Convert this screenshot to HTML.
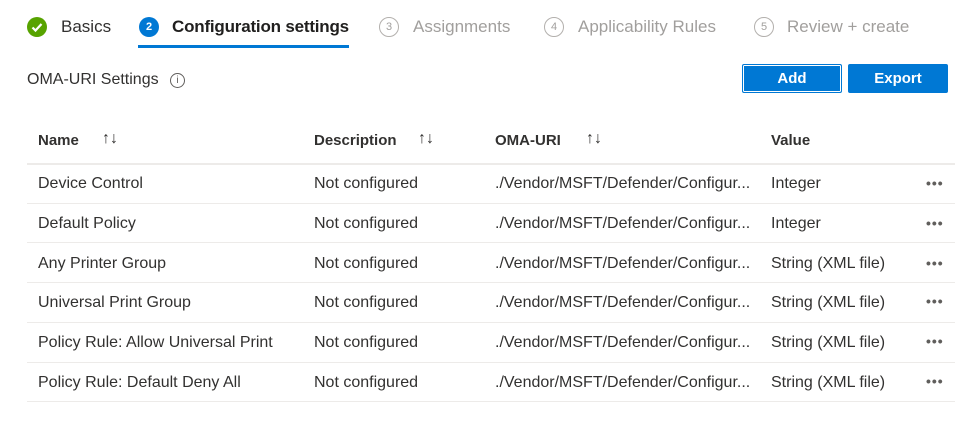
<!DOCTYPE html>
<html><head><meta charset="utf-8"><style>
body{margin:0;width:965px;height:428px;background:#fff;font-family:"Liberation Sans",sans-serif;color:#323130;position:relative;overflow:hidden}
.a{position:absolute;white-space:nowrap}
.step{font-size:17px;top:17px}
.circ{position:absolute;width:20px;height:20px;border-radius:50%;box-sizing:border-box;font-size:11px;text-align:center;line-height:18px;top:17px}
.g{color:#a19f9d}
.h{font-weight:bold;font-size:15px;top:132px}
.c{font-size:16px}
.line{position:absolute;left:27px;width:928px;height:1px;background:#edebe9}
.btn{position:absolute;top:64px;height:29px;width:100px;background:#0078d4;color:#fff;font-weight:bold;font-size:15px;text-align:center;line-height:29px;border-radius:2px;box-sizing:border-box}
.dots{position:absolute;left:926px;font-size:14px;letter-spacing:1px;color:#605e5c;font-weight:bold}
.sort{font-size:16px;color:#323130;top:130px}
</style></head><body>
<div class="circ" style="left:27px;background:#57a300;"><svg width="20" height="20" style="position:absolute;left:0;top:0"><path d="M5.5 10.5l3 3 6-6.5" stroke="#fff" stroke-width="2.2" fill="none"/></svg></div>
<div class="a step" style="left:61px">Basics</div>
<div class="circ" style="left:139px;background:#0078d4;color:#fff;font-weight:bold;line-height:20px">2</div>
<div class="a step" style="left:172px;font-weight:bold;color:#201f1e;letter-spacing:-0.2px">Configuration settings</div>
<div style="position:absolute;left:138px;top:45px;width:211px;height:3px;background:#0078d4"></div>
<div class="circ g" style="left:379px;border:1px solid #b3b0ad">3</div>
<div class="a step g" style="left:413px">Assignments</div>
<div class="circ g" style="left:544px;border:1px solid #b3b0ad">4</div>
<div class="a step g" style="left:578px">Applicability Rules</div>
<div class="circ g" style="left:754px;border:1px solid #b3b0ad">5</div>
<div class="a step g" style="left:787px">Review + create</div>

<div class="a" style="left:27px;top:71px;font-size:16px">OMA-URI Settings</div>
<div class="a" style="left:170px;top:73px;width:13px;height:13px;border:1px solid #605e5c;border-radius:50%;font-size:10px;text-align:center;line-height:13px;color:#605e5c">i</div>

<div class="btn" style="left:742px;border:1px solid #0078d4;box-shadow:inset 0 0 0 1px #fff;line-height:27px">Add</div>
<div class="btn" style="left:848px">Export</div>

<div class="a h" style="left:38px">Name</div><div class="a sort" style="left:102px">↑↓</div>
<div class="a h" style="left:314px">Description</div><div class="a sort" style="left:418px">↑↓</div>
<div class="a h" style="left:495px">OMA-URI</div><div class="a sort" style="left:586px">↑↓</div>
<div class="a h" style="left:771px">Value</div>

<div class="line" style="top:163px;height:2px"></div>
<div class="line" style="top:203px"></div>
<div class="line" style="top:242px"></div>
<div class="line" style="top:282px"></div>
<div class="line" style="top:322px"></div>
<div class="line" style="top:362px"></div>
<div class="line" style="top:401px"></div>

<div class="a c" style="left:38px;top:175px">Device Control</div>
<div class="a c" style="left:38px;top:215px">Default Policy</div>
<div class="a c" style="left:38px;top:255px">Any Printer Group</div>
<div class="a c" style="left:38px;top:294px">Universal Print Group</div>
<div class="a c" style="left:38px;top:334px">Policy Rule: Allow Universal Print</div>
<div class="a c" style="left:38px;top:374px">Policy Rule: Default Deny All</div>

<div class="a c" style="left:314px;top:175px">Not configured</div>
<div class="a c" style="left:314px;top:215px">Not configured</div>
<div class="a c" style="left:314px;top:255px">Not configured</div>
<div class="a c" style="left:314px;top:294px">Not configured</div>
<div class="a c" style="left:314px;top:334px">Not configured</div>
<div class="a c" style="left:314px;top:374px">Not configured</div>

<div class="a c" style="left:495px;top:175px">./Vendor/MSFT/Defender/Configur...</div>
<div class="a c" style="left:495px;top:215px">./Vendor/MSFT/Defender/Configur...</div>
<div class="a c" style="left:495px;top:255px">./Vendor/MSFT/Defender/Configur...</div>
<div class="a c" style="left:495px;top:294px">./Vendor/MSFT/Defender/Configur...</div>
<div class="a c" style="left:495px;top:334px">./Vendor/MSFT/Defender/Configur...</div>
<div class="a c" style="left:495px;top:374px">./Vendor/MSFT/Defender/Configur...</div>

<div class="a c" style="left:771px;top:175px">Integer</div>
<div class="a c" style="left:771px;top:215px">Integer</div>
<div class="a c" style="left:771px;top:255px">String (XML file)</div>
<div class="a c" style="left:771px;top:294px">String (XML file)</div>
<div class="a c" style="left:771px;top:334px">String (XML file)</div>
<div class="a c" style="left:771px;top:374px">String (XML file)</div>

<div class="dots" style="top:175px">•••</div>
<div class="dots" style="top:215px">•••</div>
<div class="dots" style="top:255px">•••</div>
<div class="dots" style="top:293px">•••</div>
<div class="dots" style="top:333px">•••</div>
<div class="dots" style="top:373px">•••</div>
</body></html>
